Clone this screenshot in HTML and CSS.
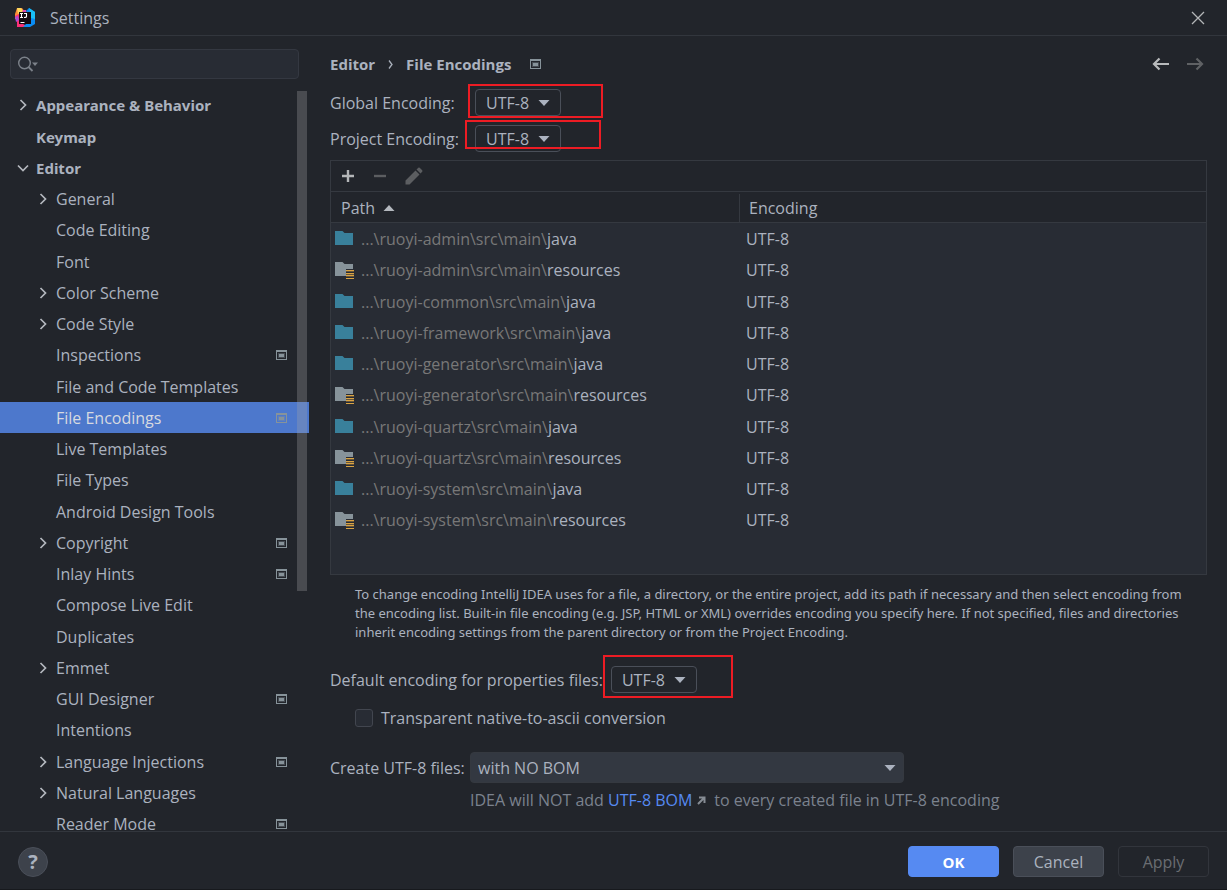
FILE: index.html
```html
<!DOCTYPE html>
<html lang="en">
<head>
<meta charset="utf-8">
<title>Settings</title>
<link rel="stylesheet" href="styles.css">
</head>
<body>
<svg class="defs" aria-hidden="true">
  <symbol id="right" viewBox="0 0 12 12"><path d="M3.500 1 8.500 6 3.500 11" fill="none" stroke="currentColor" stroke-width="1.700"/></symbol>
  <symbol id="down" viewBox="0 0 12 12"><path d="M1 3.500 6 8.500 11 3.500" fill="none" stroke="currentColor" stroke-width="1.700"/></symbol>
  <symbol id="project" viewBox="0 0 11 10"><path d="M0 0h11v10H0zM1 2v7h9V2z" fill="currentColor" fill-rule="evenodd"/><path d="M2 3h7v5H2z" fill="currentColor" opacity=".35"/><path d="M3 4h5v3H3z" fill="currentColor"/></symbol>
  <symbol id="arrow" viewBox="0 0 12 8"><path d="M.5 1h11L6 7z" fill="currentColor"/></symbol>
  <symbol id="folder" viewBox="0 0 20 18"><path d="M0 1h7.500l2 2H18v12H0z" fill="#39809b"/></symbol>
  <symbol id="resources" viewBox="0 0 20 18"><path d="M0 1h7.500l2 2H18v5h-7v7H0z" fill="#87939a"/><path d="M11 9.500h8M11 12.500h8M11 14.500h8M11 17.500h8" stroke="#d9a343" stroke-width="1"/><path d="M11 10.500h8M11 13.500h8M11 15.500h8" stroke="#d9a343" stroke-width="1" opacity=".35"/></symbol>
</svg>
<div class="window">
  <header class="titlebar">
    <svg class="logo" viewBox="0 0 20 20" aria-hidden="true">
      <path d="M2 0h5l3 4-5 8-5-1V6z" fill="#fc8a35"/>
      <path d="M2 0h4l2 3-5 3z" fill="#fdd85d"/>
      <path d="M0 8l4-2 2 9 6 3-3 1H2l0-6z" fill="#fb2f76"/>
      <path d="M0 9l3-1 1 4-3 2z" fill="#a94bd8"/>
      <path d="M8 2h3l1 3H7z" fill="#d94bb0"/>
      <path d="M11 3l3-3 6 4v12l-5 3H8l8-8z" fill="#0a8cf3"/>
      <path d="M14 0l6 4v7l-4-1z" fill="#19bff6"/>
      <path d="M4 4h12v12H4z" fill="#130b12"/>
      <path d="M5 5.500h3M6.500 5.500v4M5 9.500h3M9 5.500h2.500v3q0 1-2.500 1M5.500 14.500h4" fill="none" stroke="#fff" stroke-width="1.100"/>
    </svg>
    <h1 class="title">Settings</h1>
    <button class="icon-button" aria-label="Close"><svg width="14" height="14" viewBox="0 0 14 14"><path d="M1 1l12 12M13 1 1 13" stroke="#b4b6b8" stroke-width="1.300"/></svg></button>
  </header>
  <div class="body">
    <aside class="sidebar">
      <div class="search">
        <svg width="22" height="16" viewBox="0 0 22 16" aria-hidden="true"><circle cx="6.500" cy="7" r="5.800" fill="none" stroke="#7c828a" stroke-width="1.400"/><path d="M10.500 11l4 4" stroke="#7c828a" stroke-width="1.800"/><path d="M14 6.500h6l-3 3.500z" fill="#7c828a"/></svg>
        <input class="search-input" type="text" aria-label="Search settings">
      </div>
      <nav class="tree-area" aria-label="Settings categories">
        <ul class="tree">
          <li class="row top"><svg class="chevron"><use href="#right"/></svg><span>Appearance &amp; Behavior</span></li>
          <li class="row top"><span>Keymap</span></li>
          <li class="row top"><svg class="chevron"><use href="#down"/></svg><span>Editor</span></li>
          <li class="row"><svg class="chevron"><use href="#right"/></svg><span>General</span></li>
          <li class="row"><span>Code Editing</span></li>
          <li class="row"><span>Font</span></li>
          <li class="row"><svg class="chevron"><use href="#right"/></svg><span>Color Scheme</span></li>
          <li class="row"><svg class="chevron"><use href="#right"/></svg><span>Code Style</span></li>
          <li class="row"><span>Inspections</span><svg class="scope"><use href="#project"/></svg></li>
          <li class="row"><span>File and Code Templates</span></li>
          <li class="row selected" aria-current="page"><span>File Encodings</span><svg class="scope"><use href="#project"/></svg></li>
          <li class="row"><span>Live Templates</span></li>
          <li class="row"><span>File Types</span></li>
          <li class="row"><span>Android Design Tools</span></li>
          <li class="row"><svg class="chevron"><use href="#right"/></svg><span>Copyright</span><svg class="scope"><use href="#project"/></svg></li>
          <li class="row"><span>Inlay Hints</span><svg class="scope"><use href="#project"/></svg></li>
          <li class="row"><span>Compose Live Edit</span></li>
          <li class="row"><span>Duplicates</span></li>
          <li class="row"><svg class="chevron"><use href="#right"/></svg><span>Emmet</span></li>
          <li class="row"><span>GUI Designer</span><svg class="scope"><use href="#project"/></svg></li>
          <li class="row"><span>Intentions</span></li>
          <li class="row"><svg class="chevron"><use href="#right"/></svg><span>Language Injections</span><svg class="scope"><use href="#project"/></svg></li>
          <li class="row"><svg class="chevron"><use href="#right"/></svg><span>Natural Languages</span></li>
          <li class="row"><span>Reader Mode</span><svg class="scope"><use href="#project"/></svg></li>
        </ul>
        <div class="scrollbar"></div>
      </nav>
    </aside>
    <main class="content">
      <div class="heading">
        <h2 class="crumbs"><span>Editor</span><svg width="5" height="9" viewBox="0 0 5 9" aria-hidden="true"><path d="M1 .5 4 4.500 1 8.500" fill="none" stroke="#a9b0bb" stroke-width="1.300"/></svg><span>File Encodings</span></h2>
        <svg class="crumb-scope" aria-hidden="true"><use href="#project"/></svg>
        <div class="history">
          <button class="icon-button" aria-label="Back"><svg width="18" height="14" viewBox="0 0 18 14"><path d="M17 7H2M7.500 1.500 2 7l5.500 5.500" fill="none" stroke="#b8babc" stroke-width="2.200"/></svg></button>
          <button class="icon-button" aria-label="Forward" disabled><svg width="18" height="14" viewBox="0 0 18 14"><path d="M1 7h15M10.500 1.500 16 7l-5.500 5.500" fill="none" stroke="#5f6164" stroke-width="2.200"/></svg></button>
        </div>
      </div>
      <div class="encodings">
        <label for="global">Global Encoding:</label>
        <div class="picker"><select id="global"><option>UTF-8</option></select><svg class="arrow"><use href="#arrow"/></svg><div class="mark mark-global"></div></div>
        <label for="project-encoding">Project Encoding:</label>
        <div class="picker"><select id="project-encoding"><option>UTF-8</option></select><svg class="arrow"><use href="#arrow"/></svg><div class="mark mark-project"></div></div>
      </div>
      <section class="panel">
        <div class="toolbar">
          <button class="icon-button" aria-label="Add"><svg width="14" height="14" viewBox="0 0 14 14"><path d="M7 1v12M1 7h12" stroke="#b4b6b8" stroke-width="2.400"/></svg></button>
          <button class="icon-button" aria-label="Remove" disabled><svg width="14" height="14" viewBox="0 0 14 14"><path d="M1 7h12" stroke="#5c5e61" stroke-width="2.400"/></svg></button>
          <button class="icon-button" aria-label="Edit" disabled><svg width="18" height="18" viewBox="0 0 18 18"><path d="M.5 17.500v-4L10.500 3.500l4 4L4.500 17.500zM11.500 2.500 13.300.8q.7-.6 1.400 0l2.500 2.500q.6.700 0 1.400L15.500 6.500z" fill="#5c5e61"/></svg></button>
        </div>
        <table class="files">
          <thead><tr><th class="path-head" scope="col">Path<svg class="sort" viewBox="0 0 12 8" aria-hidden="true"><path d="M.5 7h11L6 1z" fill="#b4b8be"/></svg></th><th scope="col"><span class="encoding-head">Encoding</span></th></tr></thead>
          <tbody>
            <tr><td><svg class="folder"><use href="#folder"/></svg><span class="dim">...\ruoyi-admin\src\main\</span>java</td><td>UTF-8</td></tr>
            <tr><td><svg class="folder"><use href="#resources"/></svg><span class="dim">...\ruoyi-admin\src\main\</span>resources</td><td>UTF-8</td></tr>
            <tr><td><svg class="folder"><use href="#folder"/></svg><span class="dim">...\ruoyi-common\src\main\</span>java</td><td>UTF-8</td></tr>
            <tr><td><svg class="folder"><use href="#folder"/></svg><span class="dim">...\ruoyi-framework\src\main\</span>java</td><td>UTF-8</td></tr>
            <tr><td><svg class="folder"><use href="#folder"/></svg><span class="dim">...\ruoyi-generator\src\main\</span>java</td><td>UTF-8</td></tr>
            <tr><td><svg class="folder"><use href="#resources"/></svg><span class="dim">...\ruoyi-generator\src\main\</span>resources</td><td>UTF-8</td></tr>
            <tr><td><svg class="folder"><use href="#folder"/></svg><span class="dim">...\ruoyi-quartz\src\main\</span>java</td><td>UTF-8</td></tr>
            <tr><td><svg class="folder"><use href="#resources"/></svg><span class="dim">...\ruoyi-quartz\src\main\</span>resources</td><td>UTF-8</td></tr>
            <tr><td><svg class="folder"><use href="#folder"/></svg><span class="dim">...\ruoyi-system\src\main\</span>java</td><td>UTF-8</td></tr>
            <tr><td><svg class="folder"><use href="#resources"/></svg><span class="dim">...\ruoyi-system\src\main\</span>resources</td><td>UTF-8</td></tr>
          </tbody>
        </table>
      </section>
      <p class="help">To change encoding IntelliJ IDEA uses for a file, a directory, or the entire project, add its path if necessary and then select encoding from the encoding list. Built-in file encoding (e.g. JSP, HTML or XML) overrides encoding you specify here. If not specified, files and directories inherit encoding settings from the parent directory or from the Project Encoding.</p>
      <div class="properties">
        <label for="properties">Default encoding for properties files:</label>
        <div class="picker"><select id="properties"><option>UTF-8</option></select><svg class="arrow"><use href="#arrow"/></svg><div class="mark mark-properties"></div></div>
      </div>
      <label class="check"><input type="checkbox">Transparent native-to-ascii conversion</label>
      <div class="create">
        <label for="bom">Create UTF-8 files:</label>
        <div class="picker wide"><select id="bom"><option>with NO BOM</option></select><svg class="arrow"><use href="#arrow"/></svg></div>
        <p class="note">IDEA will NOT add <a href="#bom">UTF-8 BOM</a><svg class="external" viewBox="0 0 9 9" aria-hidden="true"><path d="M2 1.500h5.500V7M7.500 1.500 1 8" fill="none" stroke="#868c94" stroke-width="2"/></svg>to every created file in UTF-8 encoding</p>
      </div>
    </main>
  </div>
  <footer class="footer">
    <button class="help-button" aria-label="Help">?</button>
    <button class="button primary">OK</button>
    <button class="button">Cancel</button>
    <button class="button" disabled>Apply</button>
  </footer>
</div>
</body>
</html>
```
FILE: styles.css
```css
* { box-sizing: border-box; }
body { margin: 0; background: #22252b; color: #abb2bf; font: 16px/20px "Open Sans", "Noto Sans", sans-serif; }
h1, h2, p, ul { margin: 0; padding: 0; font-size: inherit; }
button, input, select { font: inherit; color: inherit; margin: 0; }
svg { display: block; flex: none; }
.defs { position: absolute; width: 0; height: 0; }
.window { height: 100vh; display: flex; flex-direction: column; border-bottom: 1px solid #17191d; }
.icon-button { display: flex; padding: 0; border: 0; background: none; }

.titlebar { display: flex; align-items: center; height: 36px; padding: 0 22px 0 15px; border-bottom: 1px solid #32363d; }
.logo { width: 20px; height: 20px; margin-right: 15px; }
.title { flex: 1; font-weight: 400; }

.body { flex: 1; min-height: 0; display: flex; }
.sidebar { width: 309px; flex: none; display: flex; flex-direction: column; padding-top: 13px; }
.search { display: flex; align-items: center; height: 30px; margin: 0 10px; padding: 0 7px; background: #282c34; border: 1px solid #343841; border-radius: 4px; }
.search-input { flex: 1; min-width: 0; border: 0; outline: 0; background: none; }
.tree-area { position: relative; flex: 1; min-height: 0; margin-top: 10px; overflow: hidden; }
.tree { list-style: none; }
.row { display: flex; align-items: center; height: 31px; padding: 0 22px 0 56px; }
.row:nth-child(4n+1) { height: 32px; }
.row.top { padding-left: 36px; font-family: "Noto Sans", sans-serif; font-size: 15px; font-weight: 700; }
.row.selected { background: #4d78cc; color: #d7dae0; }
.chevron { width: 12px; height: 12px; margin: 0 7px 0 -19px; color: #b4b8be; }
.scope { width: 11px; height: 10px; margin-left: auto; color: #87939a; }
.scrollbar { position: absolute; top: 2px; right: 2px; width: 10px; height: 500px; background: rgba(166, 166, 166, .3); }

.content { flex: 1; min-width: 0; padding: 18px 20px 0 21px; }
.heading { display: flex; align-items: center; height: 20px; }
.crumbs { display: flex; align-items: center; gap: 13px; font-size: 15px; font-weight: 700; }
.crumb-scope { width: 11px; height: 10px; margin-left: 19px; color: #87939a; }
.history { display: flex; gap: 16px; margin-left: auto; margin-right: 3px; }

.encodings { display: grid; grid-template-columns: 145px auto; justify-content: start; align-items: center; row-gap: 9px; margin-top: 15px; }
.picker { position: relative; display: flex; width: 86px; }
.picker select { appearance: none; width: 100%; height: 27px; padding: 0 10px; border: 1px solid #4a4f59; border-radius: 4px; background: #22252b; line-height: 20px; }
.arrow { position: absolute; right: 11px; top: 10px; width: 12px; height: 8px; pointer-events: none; }
.mark { position: absolute; border: 2px solid #ed1c24; pointer-events: none; }
.mark-global { left: -7px; top: -5px; width: 135px; height: 34px; }
.mark-project { left: -10px; top: -5px; width: 136px; height: 29px; }
.mark-properties { left: -8px; top: -11px; width: 130px; height: 43px; }

.panel { height: 415px; margin-top: 8px; border: 1px solid #353940; background: #282c34; }
.toolbar { display: flex; align-items: center; gap: 18px; height: 31px; padding-left: 10px; background: #22252b; border-bottom: 1px solid #353940; }
.files { width: 100%; table-layout: fixed; border-collapse: separate; border-spacing: 0; }
.files th { height: 31px; padding: 2px 0 0; background: #22252b; border-bottom: 1px solid #353940; text-align: left; font-weight: 400; }
.files .path-head { width: 408px; padding-left: 10px; }
.sort { display: inline-block; width: 12px; height: 8px; margin: 0 0 2px 8px; }
.encoding-head { display: block; padding: 4px 0 4px 9px; border-left: 1px solid #353940; }
.files td { height: 31px; padding: 0 7px; }
.files td:first-child { display: flex; align-items: center; padding: 0 4px; }
.files tbody tr:nth-child(4n+2) td { height: 32px; }
.folder { width: 20px; height: 18px; margin-right: 6px; }
.dim { color: #787878; }

.help { margin: 10px 12px 0 25px; font-family: "Noto Sans", sans-serif; font-size: 13px; line-height: 19px; }
.properties { display: flex; align-items: center; gap: 8px; margin-top: 24px; }
.check { display: flex; align-items: center; gap: 8px; margin: 15px 0 0 25px; }
.check input { appearance: none; width: 18px; height: 18px; border: 1px solid #42464f; border-radius: 3px; background: #282c34; }
.create { display: grid; grid-template-columns: 140px minmax(0, 434px); align-items: center; margin-top: 24px; row-gap: 7px; }
.wide { width: 100%; }
.wide select { height: 31px; padding: 0 7px; border-color: #353940; background: #333841; }
.wide .arrow { right: 8px; top: 12px; }
.note { grid-column: 2; display: flex; align-items: center; white-space: pre; color: #7b828e; }
.note a { color: #568af2; text-decoration: none; }
.external { width: 9px; height: 9px; margin: 0 8px 0 5px; }

.footer { display: flex; align-items: center; gap: 14px; height: 58px; padding: 2px 18px 0; border-top: 1px solid #32363d; }
.help-button { width: 30px; height: 30px; margin-right: auto; padding: 0; border: 1px solid #4a4f59; border-radius: 50%; background: #3d424b; font-size: 20px; font-weight: 700; }
.button { width: 91px; height: 31px; padding: 0; border: 1px solid #4a4f59; border-radius: 4px; background: #3d424b; }
.button.primary { border-color: #568af2; background: #568af2; color: #fff; font-size: 15px; font-weight: 700; }
.button:disabled { border-color: #32353c; background: none; color: #6a6d72; }
```
